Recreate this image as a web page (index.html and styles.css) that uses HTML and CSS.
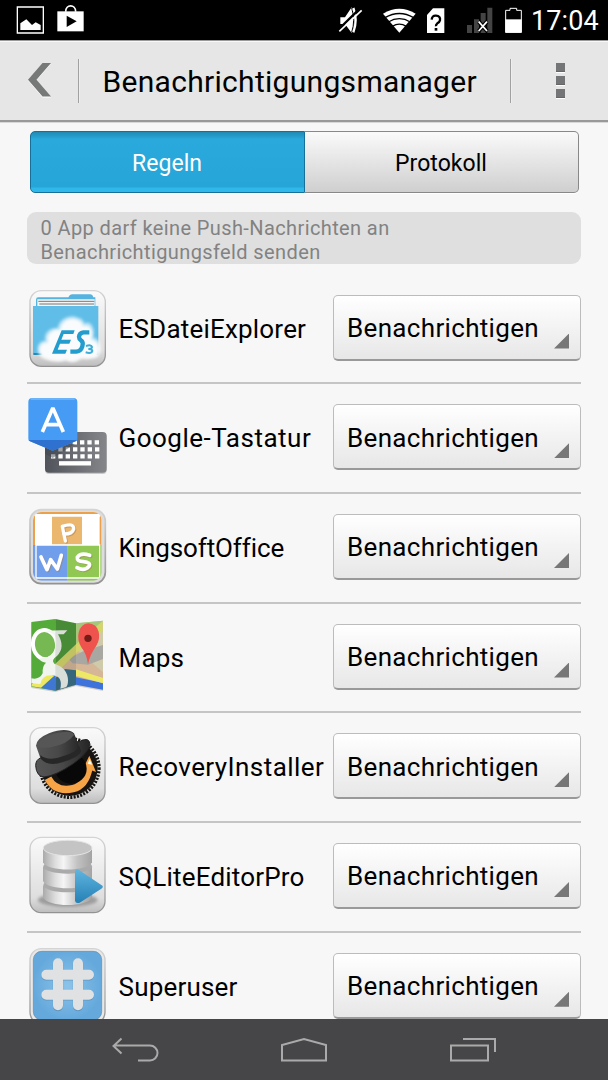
FILE: index.html
```html
<!DOCTYPE html>
<html lang="de">
<head>
<meta charset="utf-8">
<title>Benachrichtigungsmanager</title>
<link rel="stylesheet" href="styles.css">
</head>
<body>
<svg class="defs" width="0" height="0" aria-hidden="true">
  <defs>
    <linearGradient id="tile" x1="0" y1="0" x2="0" y2="1"><stop offset="0" stop-color="#fafafa"/><stop offset=".8" stop-color="#dedede"/><stop offset="1" stop-color="#bdbdbd"/></linearGradient>
    <linearGradient id="rim" x1="0" y1="0" x2="0" y2="1"><stop offset="0" stop-color="#d4d4d4"/><stop offset="1" stop-color="#929292"/></linearGradient>
    <linearGradient id="metal"><stop offset="0" stop-color="#aaa"/><stop offset=".25" stop-color="#ddd"/><stop offset=".42" stop-color="#f5f5f5"/><stop offset=".7" stop-color="#c2c2c2"/><stop offset="1" stop-color="#a4a4a4"/></linearGradient>
    <linearGradient id="play" x1="0" y1="0" x2="0" y2="1"><stop offset="0" stop-color="#5fb5df"/><stop offset="1" stop-color="#2580b5"/></linearGradient>
    <linearGradient id="keys"><stop offset="0" stop-color="#50535a"/><stop offset="1" stop-color="#85868a"/></linearGradient>
    <linearGradient id="hat"><stop offset="0" stop-color="#555"/><stop offset=".5" stop-color="#484848"/><stop offset="1" stop-color="#252525"/></linearGradient>
    <radialGradient id="sky"><stop offset="0" stop-color="#8cc3ea"/><stop offset="1" stop-color="#65a9dc"/></radialGradient>
    <filter id="soft" x="-20%" y="-20%" width="140%" height="140%"><feGaussianBlur stdDeviation="4"/></filter>
    <clipPath id="tileclip"><rect x="39" y="39" width="206" height="206" rx="25"/></clipPath>
  </defs>
</svg>
<div class="phone">
  <header class="status">
    <svg class="status-icons" width="100" height="40" viewBox="0 0 300 120">
      <path d="M52 21h78v78H52z" fill="none" stroke="#fff" stroke-width="4"/>
      <path d="M61 90V70l18-12 17 17 11-8 15 8v15z" fill="#fff"/>
      <path d="M172 34h79v60H172z" fill="#fff"/><path d="M197 35c0-23 30-23 30 0" fill="none" stroke="#fff" stroke-width="5"/>
      <path d="M200 47v34l30-17z" fill="#000"/>
    </svg>
    <svg class="status-icons" width="226" height="40" viewBox="0 0 678 120">
      <path d="M109 52h14l20-30q17 34 0 77l-20-27h-14z" fill="#fff"/>
      <path d="M143 24q12 37 0 73" fill="none" stroke="#000" stroke-width="3"/>
      <path d="M148 24q14 37 0 73" fill="none" stroke="#fff" stroke-width="7"/>
      <path d="M101 91l67-66" stroke="#000" stroke-width="7"/><path d="M106 94l67-63" stroke="#fff" stroke-width="5"/>
      <path d="M286 98l-49-57q49-29 98 0z" fill="#fff"/>
      <path d="M243 53q43-25 86 0M253 66q33-20 66 0M265 79q21-13 42 0" fill="none" stroke="#000" stroke-width="4"/>
      <path d="M369 99V45l18-20h34v74z" fill="#fff"/>
      <path d="M383 59q1-13 13-12 14 1 12 14-1 5-8 9-5 4-4 9" fill="none" stroke="#000" stroke-width="7"/><path d="M392 84h8v8h-8z" fill="#000"/>
      <path d="M489 75h15v24h-15zM510 58h15v41h-15zM530 39h15v60h-15zM550 23h15v76h-15z" fill="#444"/>
      <path d="M524 65l25 28m0-28l-25 28" stroke="#000" stroke-width="12"/><path d="M524 65l25 28m0-28l-25 28" stroke="#fff" stroke-width="5"/>
      <path d="M605 31h13v-6h20v6h14v66h-47z" fill="none" stroke="#fff" stroke-width="3"/><path d="M604 58h49v40h-49z" fill="#fff"/>
    </svg>
    <span class="clock">17:04</span>
  </header>
  <nav class="actionbar">
    <svg class="back" width="24" height="35" viewBox="0 0 24 35"><path d="M14.500.7H23L8.500 17.500 23 34.500h-8.500L0 17.500z" fill="#fff"/><path d="M14.500 0H23L8.500 16.700 23 33.500h-8.500L0 16.700z" fill="#777978"/></svg>
    <i class="rule"></i>
    <h1 class="title">Benachrichtigungsmanager</h1>
    <i class="rule"></i>
    <div class="more"><i></i><i></i><i></i></div>
  </nav>
  <main class="content">
    <div class="tabs"><div class="tab active">Regeln</div><div class="tab">Protokoll</div></div>
    <p class="hint">0 App darf keine Push-Nachrichten an<br>Benachrichtigungsfeld senden</p>
    <section class="list">
      <div class="row">
        <svg class="icon" viewBox="0 0 276 300">
          <rect x="30" y="32" width="226" height="227" rx="34" fill="url(#tile)" stroke="url(#rim)" stroke-width="4"/>
          <path d="M48 81V59q0-7 7-7h90q4-9 11-9h54q8 0 10 9h6v29z" fill="#55b3df"/>
          <path d="M52 58h172v20H52z" fill="#f5f5f5"/><path d="M55 64h168M58 72h164" stroke="#777" stroke-width="3"/>
          <path d="M39 78h196v147H45q-6 0-6-8z" fill="#5fbde7"/><path d="M40 222h26" stroke="#197da9" stroke-width="5"/>
          <path d="M68 235q-17-13-15-32 4-22 23-21-5-20 11-31 11-9 25-5 4-22 22-31 20-11 40-2 16 2 18 17 19-7 25 9 8 15 2 32 16 4 22 21 6 22-9 38-19 7-46 5-24 16-48 5-31 10-70-5z" fill="#fff" opacity=".55" filter="url(#soft)"/>
          <path d="M72 233q-16-12-14-29 6-18 26-16-8-23 13-35 12-7 23-3 2-21 20-30 17-8 33 0 15 5 16 18 17-5 24 9 6 14 0 31 18 4 24 20 4 20-8 33-20 7-46 3-24 18-46 5-31 10-65-6z" fill="#fafbfc" filter="url(#soft)"/>
          <path d="M125 151h39l-4 11h-29l-7 17h29l-5 12h-28l-7 18h28l-5 12H96z" fill="#239dcd"/>
          <path d="M208 157h-18q-12 2-13 13 0 7 6 11 8 5 4 18-4 14-18 16h-18" fill="none" stroke="#239dcd" stroke-width="13"/>
          <path d="M198 198q16-5 18 3 0 6-11 6 12 0 12 6-3 9-20 4" fill="none" stroke="#3caed8" stroke-width="6"/>
        </svg><span class="label">ESDateiExplorer</span><button class="select">Benachrichtigen</button>
      </div>
      <div class="row">
        <svg class="icon" viewBox="0 0 276 300">
          <rect x="75" y="132" width="185" height="123" rx="12" fill="#aaa" opacity=".6"/><rect x="75" y="129" width="185" height="122" rx="12" fill="url(#keys)"/>
          <path d="M158 160h80M115 181h130M93 202h145" stroke="#fff" stroke-width="13" stroke-dasharray="13 9"/><path d="M117 223h96" stroke="#fff" stroke-width="13"/>
          <path d="M75 165h90l-67 42-23-13z" fill="#40464f" opacity=".5"/>
          <path d="M25 39q0-12 12-12h123q12 0 12 12v111q0 5-5 7l-69 28-68-28q-5-2-5-7z" fill="#469bf4"/>
          <path d="M26 153h145l-4 4-69 28-68-28z" fill="#2f71cf"/><path d="M32 30h132" stroke="#78bafa" stroke-width="5"/>
          <path d="M67 129l30-69h3l30 69M78 107h41" fill="none" stroke="#fff" stroke-width="11"/>
        </svg><span class="label wide">Google-Tastatur</span><button class="select">Benachrichtigen</button>
      </div>
      <div class="row">
        <svg class="icon" viewBox="0 0 276 300">
          <rect x="30" y="32" width="226" height="222" rx="34" fill="#ddd" stroke="url(#rim)" stroke-width="5"/>
          <g clip-path="url(#tileclip)"><path d="M39 39h206v99H39z" fill="#fff"/><path d="M39 39h206v6H39zM39 50h6v88h-6zM239 50h6v88h-6z" fill="#eca04a"/><path d="M96 50h90v87H96z" fill="#ebb66d"/><path d="M39 138h104v107H39z" fill="#719eeb"/><path d="M143 138h102v107H143z" fill="#91c853"/><path d="M48 138v99h191v-99H48" fill="none" stroke="#fff" stroke-width="4"/><path d="M46 47h194v6H46z" fill="#fff"/></g>
          <g fill="none" stroke-linecap="round" stroke-linejoin="round"><g stroke="#a47945" opacity=".45" transform="translate(3 3)"><path d="M136 126l-9-44q35-12 34 8-4 16-30 15" stroke-width="10"/><path d="M63 174l18 38 11-30 20 28 12-41M209 169q-27-10-37 6-2 13 18 13 24 2 17 14-14 16-36 4" stroke-width="11"/></g><path d="M136 126l-9-44q35-12 34 8-4 16-30 15" stroke="#fff" stroke-width="10"/><path d="M63 174l18 38 11-30 20 28 12-41M209 169q-27-10-37 6-2 13 18 13 24 2 17 14-14 16-36 4" stroke="#fff" stroke-width="11"/></g>
        </svg><span class="label narrow">KingsoftOffice</span><button class="select">Benachrichtigen</button>
      </div>
      <div class="row">
        <svg class="icon" viewBox="0 0 276 300">
          <path d="M34 39l72-9 62 13 81-8v207l-81-15-62 18-72-12z" fill="#aaa" transform="translate(0 4)" opacity=".5"/>
          <path d="M34 39l72-9v215l-72-12z" fill="#55ab3a"/><path d="M106 30l62 13v184l-62 18z" fill="#4b9737"/><path d="M168 43l81-8v207l-81-15z" fill="#cfcaa9"/>
          <path d="M168 43l81-8-81 78z" fill="#a5c779"/><path d="M106 176l62-56 81 70v52l-81-15-62 18z" fill="#d5b697"/><path d="M145 149l46-23 58-18v42l-45 17-46-4z" fill="#a9a7a2"/>
          <path d="M106 164l62-58 80-70v29l-80 68-62 62z" fill="#d5d66a"/><path d="M135 180l33 4v43l-62 18v-38z" fill="#376d87"/><path d="M168 205l81 17v20l-81-15z" fill="#3e73dc"/><path d="M168 181l81 26v16l-81-23z" fill="#eee867"/>
          <path d="M34 231l55-41 17 5v50z" fill="#3f78d3"/><path d="M36 225l43-32 24 7-40 36-29-4z" fill="#ece85f"/>
          <ellipse cx="75" cy="107" rx="36" ry="44" fill="#76b953" stroke="#fff" stroke-width="12" transform="rotate(-9 75 107)"/>
          <path d="M75 66q32-3 67-2l-11 12h-17q23 39-3 65-19 12-8 23 41 13 41 51 0 15-7 20l-16 4q8-37-23-40-32-3-37 26l-27-2v-15q24 5 34-15-2-21 10-32-20-3-19-13 28 0 42-20 18-38-3-53-9-7-23-9z" fill="#f2f5ef"/>
          <path d="M106 31l62 12v184l-62 18z" fill="#303b35" opacity=".12"/>
          <path d="M204 166q-4-31-20-51-13-22-8-44 6-26 29-28 24 1 31 25 5 22-7 42-20 28-25 56z" fill="#ee534e"/><circle cx="204" cy="88" r="11" fill="#741d17"/>
        </svg><span class="label">Maps</span><button class="select">Benachrichtigen</button>
      </div>
      <div class="row">
        <svg class="icon" viewBox="0 0 276 300">
          <rect x="30" y="29" width="225" height="227" rx="34" fill="url(#tile)" stroke="url(#rim)" stroke-width="4"/>
          <circle cx="149" cy="150" r="88" fill="none" stroke="#171411" stroke-width="10" stroke-dasharray="6 4"/><circle cx="149" cy="150" r="84" fill="#171411"/>
          <path d="M84 181q23 43 75 31 38-9 48-62" fill="none" stroke="#f7a447" stroke-width="22"/><path d="M187 157l21-44 20 49-18-7z" fill="#f7a447"/><path d="M203 137l6-14 7 17z" fill="#fff"/>
          <ellipse cx="153" cy="152" rx="47" ry="45" fill="#080808"/>
          <path d="M47 143q0-18 16-24l118-50q27-13 29 10-4 26-50 58-54 37-88 40-23-2-25-34z" fill="url(#hat)" stroke="#222" stroke-width="3"/>
          <path d="M61 120L48 83q2-22 39-37 52-20 75 0l21 53q-4 19-51 34-47 16-71-13z" fill="url(#hat)"/><path d="M50 82q17-31 74-39 35-5 38 8-20 28-69 37-37 5-43-6z" fill="#565656"/>
          <path d="M61 111q24 21 70 3 38-12 47-28l5 15q-10 16-55 31-43 15-66-10z" fill="#272727"/>
        </svg><span class="label wider">RecoveryInstaller</span><button class="select">Benachrichtigen</button>
      </div>
      <div class="row">
        <svg class="icon" viewBox="0 0 276 300">
          <rect x="30" y="28" width="225" height="226" rx="34" fill="url(#tile)" stroke="url(#rim)" stroke-width="4"/>
          <ellipse cx="143" cy="216" rx="90" ry="20" fill="#777" opacity=".6" filter="url(#soft)"/>
          <path d="M69 173v35c13 31 135 31 147 0v-35z" fill="url(#metal)"/><ellipse cx="143" cy="171" rx="73" ry="22" fill="#aaa"/>
          <path d="M69 117v42c13 29 135 29 147 0v-42z" fill="url(#metal)"/><ellipse cx="143" cy="115" rx="73" ry="22" fill="#aaa"/>
          <path d="M69 60v43c13 29 135 29 147 0V60z" fill="url(#metal)"/><ellipse cx="143" cy="60" rx="73" ry="23" fill="#c4c4c4" stroke="#e4e4e4" stroke-width="3"/>
          <path d="M165 132q0-12 12-6l67 45q9 5 0 11l-65 42q-12 4-14-6z" fill="url(#play)"/>
        </svg><span class="label">SQLiteEditorPro</span><button class="select">Benachrichtigen</button>
      </div>
      <div class="row">
        <svg class="icon" viewBox="0 10 276 300">
          <rect x="30" y="42" width="225" height="225" rx="34" fill="#e8e8e8" stroke="url(#rim)" stroke-width="4"/><rect x="40" y="50" width="205" height="206" rx="25" fill="url(#sky)" stroke="#6386a2" stroke-width="2"/>
          <path d="M114 88v126M174 88v126M79 122h128M79 182h128" stroke="#5989ad" stroke-width="31" stroke-linecap="round" opacity=".65"/><path d="M114 86v126M174 86v126M79 120h128M79 180h128" stroke="#e0e1e3" stroke-width="30" stroke-linecap="round"/>
        </svg><span class="label">Superuser</span><button class="select">Benachrichtigen</button>
      </div>
    </section>
  </main>
  <footer class="navbar">
    <svg viewBox="80 1019 450 61" width="450" height="61" fill="none" stroke="#aaa" stroke-width="2">
      <path d="M121.500 1038.500l-8 7.500 8 7.500M114 1045.500h36a7.500 7.500 0 0 1 0 15h-12"/>
      <path d="M282 1060.500v-15.500l22-6 22 6v15.500z"/><path d="M451 1045.500h37v15h-37zM463 1039h32v13"/>
    </svg>
  </footer>
</div>
</body>
</html>
```
FILE: styles.css
```css
* { box-sizing: border-box; }
body { margin: 0; background: #f7f7f7; color: #000; font-family: Roboto, "Noto Sans", sans-serif; }
.defs { position: absolute; }
.phone { width: 608px; height: 1080px; display: flex; flex-direction: column; overflow: hidden; }
.status { height: 40px; flex: none; background: #000; color: #fff; display: flex; }
.status-icons { flex: none; }
.status-icons + .status-icons { margin-left: 204px; }
.clock { font-size: 27px; line-height: 43px; letter-spacing: .1px; padding-left: 1px; white-space: nowrap; }
.actionbar { height: 82px; flex: none; display: flex; align-items: center; background: #e6e6e6; border-top: 1px solid #999; border-bottom: 2px solid #999; box-shadow: inset 0 1px #f8f8f8, 0 1px #d8d8d8; padding-left: 28px; }
.back { flex: none; }
.rule { width: 2px; height: 44px; background: #a1a1a1; border-right: 1px solid #eee; flex: none; }
.back + .rule { margin-left: 26px; }
.title { width: 430px; margin: 0; padding: 2px 0 0 22.500px; font-size: 30px; line-height: 40px; font-weight: 400; letter-spacing: .3px; white-space: nowrap; flex: none; }
.more { width: 9px; margin-left: 44px; display: grid; gap: 4.500px; }
.more i { height: 8.500px; background: #747577; border-bottom: 1px solid #666; box-shadow: 0 1px #fff; }
.content { height: 897px; flex: none; overflow: hidden; padding-top: 9px; }
.tabs { display: flex; width: 549px; height: 62px; margin-left: 29.500px; border-radius: 5px; box-shadow: 0 1px #fff; }
.tab { flex: 1; border: 1px solid #888; border-left: 0; border-radius: 0 5px 5px 0; display: flex; justify-content: center; align-items: center; padding-top: 2px; font-size: 23px; letter-spacing: .05px; background: linear-gradient(#fafafa, #cfcfcf); }
.tab.active { color: #fff; border: 1px solid #16709a; border-radius: 5px 0 0 5px; background: linear-gradient(#2289b2, #2aa9dc 12%, #25a5d8 92%, #31b8eb 93%); }
.hint { width: 554px; height: 52px; margin: 19px 0 0 27px; padding: 3.500px 13.500px; border-radius: 9px; background: #dfdfdf; color: #828282; font-size: 20px; line-height: 24px; letter-spacing: .39px; }
.list { padding-top: 8.500px; }
.row { position: relative; height: 109.700px; display: flex; padding-left: 20px; }
.row::after { content: ""; position: absolute; left: 27px; bottom: -2px; width: 554px; height: 2px; background: #c5c5c5; }
.icon { width: 92px; height: 100px; margin-top: 7px; flex: none; }
.label { width: 221px; padding-left: 6.500px; line-height: 113px; font-size: 26px; letter-spacing: .2px; white-space: nowrap; flex: none; }
.label.wide { letter-spacing: .5px; }
.label.wider { letter-spacing: .43px; }
.label.narrow { letter-spacing: -.1px; }
.select { position: relative; width: 248px; height: 66px; margin-top: 22px; padding: 2px 0 0 13px; border: 1px solid #bcbcbc; border-bottom: 2px solid #999; border-radius: 5px; background: linear-gradient(#fff, #e7e7e7); text-align: left; font: 26px Roboto, sans-serif; letter-spacing: .33px; color: #000; flex: none; }
.select::after { content: ""; position: absolute; right: 11px; bottom: 10px; width: 15px; height: 15px; background: #777; clip-path: polygon(100% 0, 100% 100%, 0 100%); }
.navbar { height: 61px; flex: none; background: #464648; padding-left: 80px; }
.navbar svg { display: block; }
```
